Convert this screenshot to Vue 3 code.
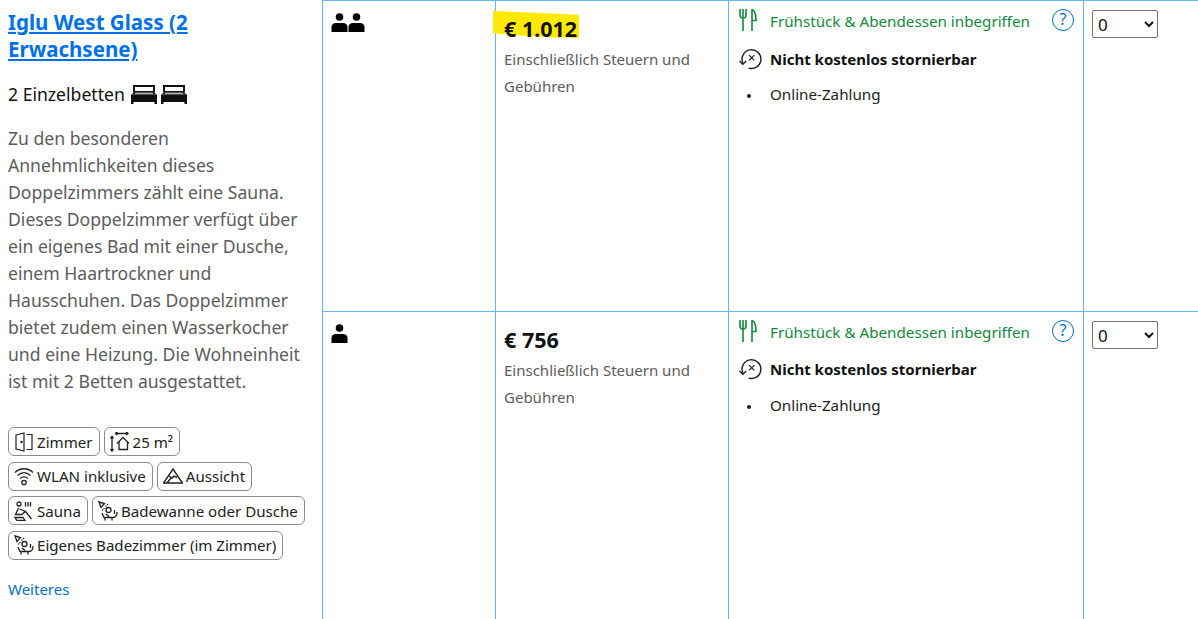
<script setup>
const rooms = [
  { id: 1, price: '€ 1.012', persons: 2, marked: true },
  { id: 2, price: '€ 756', persons: 1, marked: false }
];
</script>

<template>
  <div class="table">
    <div class="room-cell">
      <a class="room-title" href="#">Iglu West Glass (2 Erwachsene)</a>
      <div class="beds">
        <span>2 Einzelbetten</span>
        <svg v-for="n in 2" :key="n" class="bed" viewBox="0 0 28 19">
          <path d="M4 7V1h20v6" fill="none" stroke="#111" stroke-width="2" />
          <path d="M5 6h18l3.500 3.500H1.500z" fill="#111" />
          <path d="M5.500 7.500h17l1.500 2H4z" fill="#aaa" />
          <rect x="1" y="9.500" width="26" height="7.500" fill="#111" />
          <rect x="1" y="17" width="2.500" height="2" fill="#111" />
          <rect x="24.500" y="17" width="2.500" height="2" fill="#111" />
        </svg>
      </div>
      <p class="desc">Zu den besonderen Annehmlichkeiten dieses Doppelzimmers zählt eine Sauna. Dieses Doppelzimmer verfügt über ein eigenes Bad mit einer Dusche, einem Haartrockner und Hausschuhen. Das Doppelzimmer bietet zudem einen Wasserkocher und eine Heizung. Die Wohneinheit ist mit 2 Betten ausgestattet.</p>
      <div class="tags">
        <div class="tag-row">
          <span class="tag">
            <svg viewBox="0 0 20 20" class="tag-icon" fill="none" stroke="#222" stroke-width="1.200">
              <path d="M2 3L10 1V19L2 17Z" />
              <path d="M12.500 2.500h5.500v15h-5.500" />
              <circle cx="7.500" cy="10" r=".6" fill="#222" />
            </svg>
            Zimmer
          </span>
          <span class="tag">
            <svg viewBox="0 0 20 20" class="tag-icon" fill="none" stroke="#222" stroke-width="1.300">
              <path d="M5 1.500h13.500M5 1.500l2.500-1.500M5 1.500l2.500 1.500M18.500 1.500l-2.500-1.500M18.500 1.500l-2.500 1.500" />
              <path d="M2 4v15.500M2 4L0.500 6.500M2 4l1.500 2.500M2 19.500l-1.500-2.500M2 19.500l1.500-2.500" />
              <path d="M7 11.500l6-6 6 6M9 10v7.500h8.500V10" />
            </svg>
            25 m²
          </span>
        </div>
        <div class="tag-row">
          <span class="tag">
            <svg viewBox="0 0 20 20" class="tag-icon" fill="none" stroke="#222" stroke-width="1.300">
              <path d="M1 6.500c5-5 13-5 18 0M3.500 9.500c4-3.500 9-3.500 13 0M6 12.500c2.500-2 5.500-2 8 0" />
              <circle cx="10" cy="16.500" r="2.200" />
            </svg>
            WLAN inklusive
          </span>
          <span class="tag">
            <svg viewBox="0 0 20 20" class="tag-icon" fill="none" stroke="#222" stroke-width="1.400">
              <path d="M0.500 17L10 3l9.500 14ZM6 10l3 2 2-2 3 1.500M4 17l4-5" />
            </svg>
            Aussicht
          </span>
        </div>
        <div class="tag-row">
          <span class="tag">
            <svg viewBox="0 0 20 20" class="tag-icon" fill="none" stroke="#222" stroke-width="1.300">
              <circle cx="5" cy="3" r="2" />
              <path d="M11.500 1v4.500M14 1v4.500M16.500 1v4.500" />
              <path d="M4.500 7L1.500 13.500h6l4-3 6 7.500M5.500 8l6 2.500M1 16.500h8l2 3H3z" />
            </svg>
            Sauna
          </span>
          <span class="tag">
            <svg viewBox="0 0 20 20" class="tag-icon" fill="none" stroke="#222" stroke-width="1.300">
              <path d="M1 1l5.500 1.500-3.500 4z" />
              <path d="M8 5h.01M9.500 3.500h.01M6 7.500h.01M4.500 9h.01" stroke-linecap="round" stroke-width="1.500" />
              <circle cx="10.500" cy="9" r="2.500" />
              <path d="M4 12l2 4.500h9c2.500 0 4-2 4-5.500M16.500 9v4M8 13l3 2.500M7 16.500v3M14 16.500v3" />
            </svg>
            Badewanne oder Dusche
          </span>
        </div>
        <div class="tag-row">
          <span class="tag">
            <svg viewBox="0 0 20 20" class="tag-icon" fill="none" stroke="#222" stroke-width="1.300">
              <path d="M1 1l5.500 1.500-3.500 4z" />
              <path d="M8 5h.01M9.500 3.500h.01M6 7.500h.01M4.500 9h.01" stroke-linecap="round" stroke-width="1.500" />
              <circle cx="10.500" cy="9" r="2.500" />
              <path d="M4 12l2 4.500h9c2.500 0 4-2 4-5.500M16.500 9v4M8 13l3 2.500M7 16.500v3M14 16.500v3" />
            </svg>
            Eigenes Badezimmer (im Zimmer)
          </span>
        </div>
      </div>
      <a class="more" href="#">Weiteres</a>
    </div>

    <div v-for="room in rooms" :key="room.id" class="row">
      <div class="persons-cell">
        <svg v-for="n in room.persons" :key="n" class="person" viewBox="0 0 17 19">
          <circle cx="8.500" cy="4" r="3.800" fill="#000" />
          <path d="M0.500 19v-5C0.500 11.500 2.500 10 5 10h7c2.500 0 4.500 1.500 4.500 4v5z" fill="#000" />
        </svg>
      </div>
      <div class="price-cell">
        <div class="price-wrap">
          <svg v-if="room.marked" class="marker" viewBox="0 0 86 27" preserveAspectRatio="none">
            <path d="M0 0C20 1 60 2 86 4L86 27C60 27 25 25 0 22Z" fill="#ffe900" />
          </svg>
          <span class="price">{{ room.price }}</span>
        </div>
        <div class="tax">Einschließlich Steuern und Gebühren</div>
      </div>
      <div class="cond-cell">
        <div class="meal">
          <svg class="fork" viewBox="0 0 18 22" fill="none" stroke="#118a3c" stroke-width="1.600">
            <path d="M1 0v6c0 2 1 3 3 3s3-1 3-3V0M4 0v22" />
            <path d="M13 0.500c3 1 4 6 4 11h-4zM13 11v11" />
          </svg>
          <span class="meal-text">Frühstück &amp; Abendessen inbegriffen</span>
          <span class="help">?</span>
        </div>
        <div class="cancel">
          <svg class="cancel-icon" viewBox="0 0 24 24" fill="none" stroke="#222" stroke-width="1.500">
            <path d="M4 16.500A9.800 9.800 0 1 1 10 22" />
            <path d="M0.500 14.500l3.500 3.500 3.500-3.500" />
            <path d="M10.500 8.500l5.500 5.500M16 8.500l-5.500 5.500" stroke-width="1.300" />
          </svg>
          <strong>Nicht kostenlos stornierbar</strong>
        </div>
        <ul class="pay">
          <li>Online-Zahlung</li>
        </ul>
      </div>
      <div class="select-cell">
        <select class="qty">
          <option>0</option>
          <option>1</option>
        </select>
      </div>
    </div>
  </div>
</template>

<style>
html, body {
  margin: 0;
  background: #fff;
  overflow: hidden;
}
</style>

<style scoped>
.table {
  display: grid;
  grid-template-columns: 322px 1fr;
  grid-template-rows: 311px 308px;
  width: 1198px;
  height: 619px;
  font-family: "Noto Sans", "Open Sans", sans-serif;
  color: #1a1a1a;
  overflow: hidden;
}
.room-cell {
  grid-row: 1 / 3;
  padding: 9px 14px 0 8px;
}
.room-title {
  display: block;
  font-size: 20.500px;
  line-height: 27px;
  font-weight: 700;
  color: #0071eb;
}
.beds {
  display: flex;
  align-items: center;
  gap: 2px;
  margin-top: 19px;
  font-size: 17.600px;
  color: #111;
}
.beds span {
  margin-right: 3px;
}
.bed {
  width: 28px;
  height: 19px;
}
.desc {
  margin: 19px 0 0;
  font-size: 17.600px;
  line-height: 27px;
  color: #5c5c5c;
}
.tags {
  display: flex;
  flex-direction: column;
  gap: 5.500px;
  margin-top: 32px;
}
.tag-row {
  display: flex;
  gap: 4px;
}
.tag {
  display: inline-flex;
  align-items: center;
  gap: 3px;
  height: 27px;
  padding: 0 6px 0 5px;
  border: 1px solid #8c8c8c;
  border-radius: 6px;
  font-size: 15.100px;
  color: #222;
  white-space: nowrap;
}
.tag-icon {
  width: 20px;
  height: 20px;
  flex: none;
}
.more {
  display: block;
  margin-top: 19.500px;
  font-size: 15px;
  color: #0071c2;
  text-decoration: none;
}
.row {
  grid-column: 2;
  display: grid;
  grid-template-columns: 173px 233px 355px 1fr;
  border-top: 1px solid #62b6f7;
}
.row > div {
  border-left: 1px solid #62b6f7;
}
.persons-cell {
  display: flex;
  gap: 0;
  align-items: flex-start;
  padding: 12px 0 0 8px;
}
.person {
  width: 17px;
  height: 19px;
}
.price-cell {
  padding: 13px 8px 0;
}
.price-wrap {
  position: relative;
  height: 30px;
  display: flex;
  align-items: center;
}
.marker {
  position: absolute;
  left: -11px;
  top: -3px;
  width: 86px;
  height: 27px;
}
.price {
  position: relative;
  margin-bottom: 2px;
  font-size: 21.500px;
  font-weight: 700;
  color: #111;
}
.tax {
  margin-top: 2px;
  font-size: 15px;
  line-height: 27px;
  color: #5c5c5c;
}
.cond-cell {
  padding: 5px 9px 0 10px;
}
.meal {
  display: flex;
  align-items: center;
  height: 30px;
}
.fork {
  width: 18px;
  height: 22px;
  margin: 0 13px 3px 0;
}
.meal-text {
  flex: 1;
  font-size: 15.200px;
  color: #118a3c;
}
.help {
  box-sizing: border-box;
  width: 22px;
  height: 22px;
  margin-bottom: 2px;
  border: 1.500px solid #0071c2;
  border-radius: 50%;
  font-size: 16px;
  line-height: 19px;
  text-align: center;
  color: #0071c2;
}
.cancel {
  display: flex;
  align-items: center;
  margin-top: 11px;
}
.row + .row .cancel {
  margin-top: 10px;
}
.cancel-icon {
  width: 23px;
  height: 23px;
  margin-right: 8px;
}
.cancel strong {
  color: #111;
  font-size: 15px;
}
.pay {
  list-style: none;
  margin: 12px 0 0;
  padding: 0;
  font-size: 15.200px;
  line-height: 24px;
  color: #222;
}
.row + .row .pay {
  margin-top: 13px;
}
.pay li {
  display: flex;
  align-items: center;
}
.pay li::before {
  content: "";
  width: 4px;
  height: 4px;
  margin: 3px 19px 0 8px;
  border-radius: 50%;
  background: #222;
}
.select-cell {
  padding: 9px 0 0 8px;
}
.qty {
  width: 66px;
  height: 28px;
  padding-left: 1px;
  font-family: inherit;
  font-size: 17px;
  color: #111;
  background: #fff;
  border: 1px solid #767676;
  border-radius: 2px;
}
</style>
